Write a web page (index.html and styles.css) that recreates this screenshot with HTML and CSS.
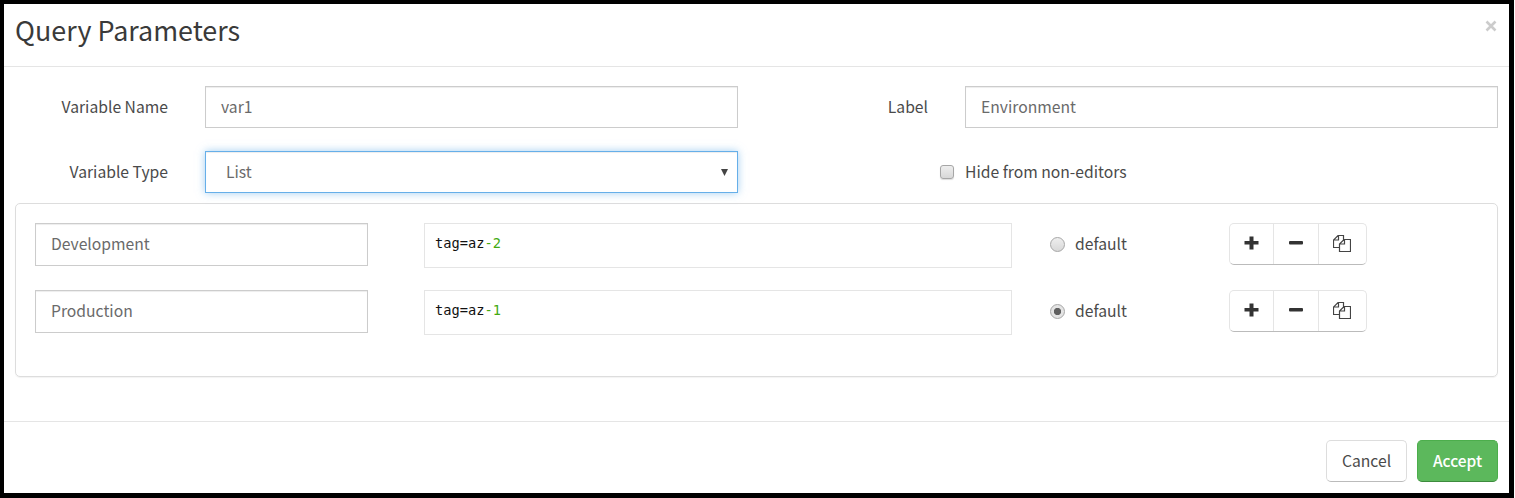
FILE: index.html
```html
<!DOCTYPE html>
<html lang="en">
<head>
<meta charset="utf-8">
<title>Query Parameters</title>
<link rel="stylesheet" href="styles.css">
</head>
<body>
<div class="modal">
  <header class="modal-header">
    <h1 class="title">Query Parameters</h1>
    <svg class="close" viewBox="0 0 12 12"><path d="M1.500 1.500 10.500 10.500M10.500 1.500 1.500 10.500"/></svg>
  </header>
  <main class="modal-body">
    <div class="form-row">
      <span class="label">Variable Name</span>
      <div class="control"><span class="text">var1</span></div>
      <span class="label">Label</span>
      <div class="control"><span class="text">Environment</span></div>
    </div>
    <div class="form-row">
      <span class="label">Variable Type</span>
      <div class="control select"><span class="text">List</span><svg class="arrow" viewBox="0 0 7 7"><path d="M0 0H7L3.500 7Z"/></svg></div>
      <span class="check-cell"><i class="checkbox"></i></span>
      <span class="check-label">Hide from non-editors</span>
    </div>
    <section class="panel">
      <div class="item">
        <div class="control name"><span class="text">Development</span></div>
        <div class="code">tag=az<span class="num">-2</span></div>
        <i class="radio"></i><span class="radio-label">default</span>
        <div class="group">
          <span class="gbtn"><svg class="icon" viewBox="0 0 18 18"><path class="solid" d="M7.500 2.500h4v4.500h5v3.500h-5v5h-4v-5h-5V7h5z"/></svg></span>
          <span class="gbtn"><svg class="icon" viewBox="0 0 18 18"><rect class="solid" x="2" y="7" width="14" height="3.600" rx="1"/></svg></span>
          <span class="gbtn"><svg class="icon copy" viewBox="0 0 18 18"><path d="M6.500 13.500H.500V6L5 1.500h5.500V6M5.500 1.500V6H.500M11 5.500h6.500v12h-11V10zM11.500 5.500v4.500H6.500"/></svg></span>
        </div>
      </div>
      <div class="item">
        <div class="control name"><span class="text">Production</span></div>
        <div class="code">tag=az<span class="num">-1</span></div>
        <i class="radio checked"></i><span class="radio-label">default</span>
        <div class="group">
          <span class="gbtn"><svg class="icon" viewBox="0 0 18 18"><path class="solid" d="M7.500 2.500h4v4.500h5v3.500h-5v5h-4v-5h-5V7h5z"/></svg></span>
          <span class="gbtn"><svg class="icon" viewBox="0 0 18 18"><rect class="solid" x="2" y="7" width="14" height="3.600" rx="1"/></svg></span>
          <span class="gbtn"><svg class="icon copy" viewBox="0 0 18 18"><path d="M6.500 13.500H.500V6L5 1.500h5.500V6M5.500 1.500V6H.500M11 5.500h6.500v12h-11V10zM11.500 5.500v4.500H6.500"/></svg></span>
        </div>
      </div>
    </section>
  </main>
  <footer class="modal-footer">
    <span class="btn">Cancel</span>
    <span class="btn primary">Accept</span>
  </footer>
</div>
</body>
</html>
```
FILE: styles.css
```css
* { box-sizing: border-box; }
html { background: #fff; }
body {
  margin: 0;
  width: 1514px;
  height: 498px;
  padding: 4px 5px 5px 4px;
  background: #000;
  color: #4a4a4a;
  font: 400 15.7px/24px "Noto Sans CJK SC", sans-serif;
  overflow: hidden;
}
.modal { height: 489px; background: #fff; display: flex; flex-direction: column; }
.modal-header {
  height: 63px;
  padding: 0 12px 9px 11px;
  border-bottom: 1px solid #e5e5e5;
  display: flex;
  justify-content: space-between;
}
.title { margin: 6px 0 0; color: #3a3a3a; font-size: 26.9px; line-height: 40px; font-weight: 400; white-space: nowrap; }
.close { width: 12px; height: 12px; margin: 16px 0 0; fill: none; stroke: #ccc; stroke-width: 2.6; }
.modal-body { height: 354px; padding: 19px 11px 0; }
.form-row { display: grid; grid-template-columns: 190px 533px 227px 533px; height: 65px; }
.label { padding-right: 37px; line-height: 42px; text-align: right; }
.control {
  height: 42px;
  border: 1px solid #ccc;
  padding: 0 15px;
  color: #6a6a6a;
  display: flex;
  align-items: center;
  background: #fff;
  box-shadow: inset 0 1px 1px rgba(0,0,0,.075);
}
.select {
  padding: 0 9px 0 20px;
  justify-content: space-between;
  border-color: #66afe9;
  box-shadow: inset 0 1px 1px rgba(0,0,0,.075), 0 0 8px rgba(102,175,233,.6);
}
.arrow { width: 7px; height: 7px; fill: #444; }
.check-cell { display: flex; justify-content: flex-end; padding: 14px 11px 0 0; }
.checkbox { width: 14px; height: 14px; border: 1px solid #a6a6a6; border-radius: 3px; background: linear-gradient(#eee, #d8d8d8); box-shadow: 0 1px 1px #ddd; }
.check-label { line-height: 42px; }
.panel {
  height: 174px;
  margin-top: -13px;
  padding: 19px 19px 0;
  border: 1px solid #ddd;
  border-radius: 5px;
  box-shadow: 0 1px 1px rgba(0,0,0,.05);
}
.item { height: 67px; display: flex; align-items: flex-start; }
.name { width: 333px; height: 43px; margin-right: 56px; }
.name .text { padding-bottom: 1px; }
.code {
  width: 588px;
  height: 45px;
  margin-right: 38px;
  border: 1px solid #e5e5e5;
  padding: 8px 10px;
  color: #111;
  font: 13.7px/22px "DejaVu Sans Mono", "Liberation Mono", monospace;
}
.num { color: #4a1; }
.radio { width: 15px; height: 15px; margin: 14px 10px 0 0; border: 1px solid #a6a6a6; border-radius: 50%; background: linear-gradient(#eee, #d8d8d8); }
.radio.checked { background: radial-gradient(circle, #606060 0 3.3px, #e4e4e4 4px); }
.radio-label { width: 154px; line-height: 42px; }
.group { display: flex; width: 138px; height: 42px; border: 1px solid #e5e5e5; border-bottom-color: #bbb; border-radius: 5px; }
.gbtn { flex: 1; display: flex; align-items: center; justify-content: center; padding-bottom: 2px; }
.gbtn:first-child { flex: 0 0 43px; padding-right: 1px; }
.gbtn + .gbtn { border-left: 1px solid #e5e5e5; }
.gbtn:last-child { flex: 0 0 48px; padding-right: 1px; }
.icon { width: 18px; height: 18px; }
.solid { fill: #333; }
.copy { fill: none; stroke: #444; stroke-width: 1.2; }
.modal-footer { height: 72px; border-top: 1px solid #e5e5e5; padding: 18px 11px 0; display: flex; gap: 10px; justify-content: flex-end; }
.btn { width: 81px; height: 42px; line-height: 40px; text-align: center; border: 1px solid #ddd; border-bottom-color: #bbb; border-radius: 5px; }
.primary { color: #fff; font-size: 15.5px; line-height: 38px; font-weight: 500; background: #5cb85c; border-color: #4cae4c; border-bottom-color: #3d8b3d; }
```
